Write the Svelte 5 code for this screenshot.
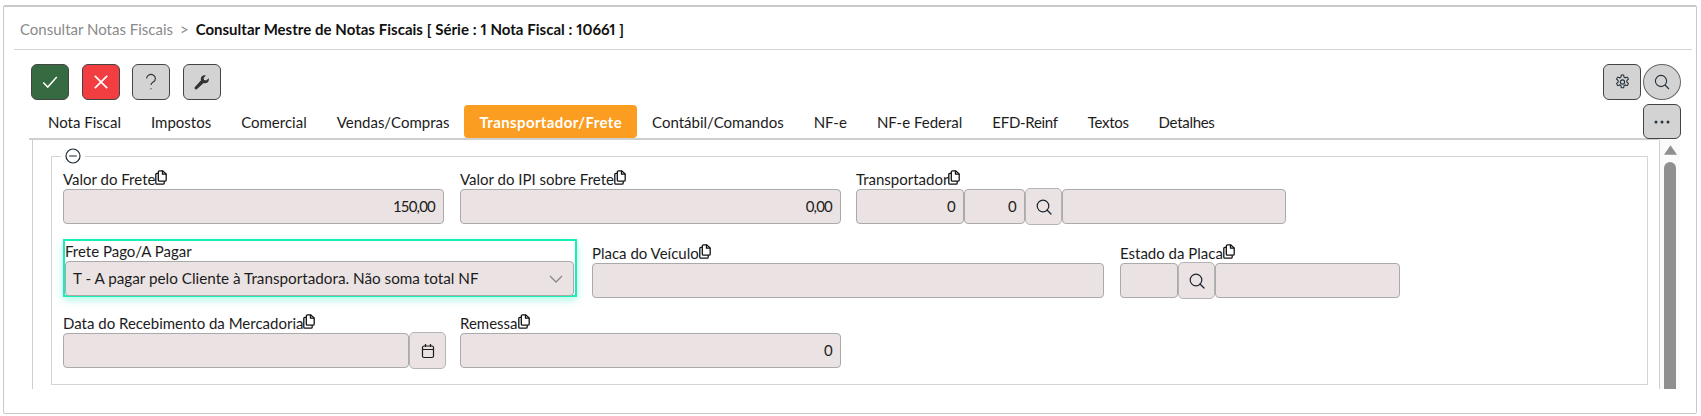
<script>
  const tabs = ["Nota Fiscal", "Impostos", "Comercial", "Vendas/Compras", "Transportador/Frete", "Contábil/Comandos", "NF-e", "NF-e Federal", "EFD-Reinf", "Textos", "Detalhes"];
  const active = "Transportador/Frete";
</script>

{#snippet copyIcon()}
  <svg class="copy" viewBox="0 0 12 15" fill="none" stroke="#111" stroke-width="1.3" aria-hidden="true">
    <path d="M4.5 .8h3.2L11.2 4v6a1.2 1.2 0 0 1-1.2 1.2H4.5A1.2 1.2 0 0 1 3.3 10V2A1.2 1.2 0 0 1 4.5 .8z" />
    <path d="M7.5 .8v3.4h3.7" />
    <path d="M3.3 3.4H2A1.2 1.2 0 0 0 .8 4.6V13A1.2 1.2 0 0 0 2 14.2h6A1.2 1.2 0 0 0 9.2 13v-1.8" />
  </svg>
{/snippet}

{#snippet searchIcon()}
  <svg class="ico" viewBox="0 0 16 16" fill="none" stroke="#1c2430" stroke-width="1.2" aria-hidden="true">
    <circle cx="7" cy="7" r="5.8" />
    <path d="M11 11l4 4" stroke-linecap="round" />
  </svg>
{/snippet}

{#snippet label(text)}
  <div class="label">{text}{@render copyIcon()}</div>
{/snippet}

<div class="frame">
  <header class="crumbs">
    <span class="parent">Consultar Notas Fiscais</span>
    <span class="sep">&gt;</span>
    <span class="current">Consultar Mestre de Notas Fiscais [ Série : 1 Nota Fiscal : 10661 ]</span>
  </header>

  <div class="toolbar">
    <div class="group">
      <button class="btn ok" aria-label="Confirmar">
        <svg viewBox="0 0 16 16" width="18" height="18" fill="none" stroke="#fff" stroke-width="1.3"><path d="M2 8.5l4 4 8-9" /></svg>
      </button>
      <button class="btn cancel" aria-label="Cancelar">
        <svg viewBox="0 0 16 16" width="18" height="18" fill="none" stroke="#fff" stroke-width="1.5"><path d="M2.5 2.5l11 11M13.5 2.5l-11 11" /></svg>
      </button>
      <button class="btn grey" aria-label="Ajuda">
        <svg viewBox="0 0 16 20" width="14" height="18" fill="none" stroke="#333" stroke-width="1.3"><path d="M3 6a5 4.6 0 1 1 7.6 3.9C9 11 8 11.6 8 13.5" /><path d="M8 17v1.4" /></svg>
      </button>
      <button class="btn grey" aria-label="Ferramentas">
        <svg viewBox="0 0 16 16" width="15" height="15" fill="#333"><path d="M15.6 3.4l-2.6 2.5-2.2-.6-.6-2.2L12.7.5a4 4 0 0 0-5.2 5.1L.8 13a1.6 1.6 0 0 0 2.2 2.2l7.3-6.7a4 4 0 0 0 5.3-5.1z" /></svg>
      </button>
    </div>
    <div class="group right">
      <button class="btn grey gear" aria-label="Configurar">
        <svg viewBox="0 0 16 16" width="17" height="17" fill="none" stroke="#24303c" stroke-width="1"><path d="M6.9 1h2.2l.4 2 1.1.6 1.9-.7 1.1 1.9-1.5 1.4v1.5l1.5 1.4-1.1 1.9-1.9-.7-1.1.6-.4 2.1H6.9l-.4-2.1-1.1-.6-1.9.7-1.1-1.9 1.5-1.4V6.2L2.4 4.8l1.1-1.9 1.9.7 1.1-.6z" /><circle cx="8" cy="7.5" r="2" /></svg>
      </button>
      <button class="btn grey round" aria-label="Pesquisar">
        <svg viewBox="0 0 16 16" width="16" height="16" fill="none" stroke="#24303c" stroke-width="1.1"><circle cx="7" cy="7" r="5.6" /><path d="M11 11l4 4" /></svg>
      </button>
    </div>
  </div>

  <div class="tabrow">
    <nav class="tabs">
      {#each tabs as tab}
        <span class="tab" class:active={tab === active}>{tab}</span>
      {/each}
    </nav>
    <button class="btn grey dots" aria-label="Mais">
      <svg viewBox="0 0 16 4" width="16" height="4" fill="#2a3440"><circle cx="2" cy="2" r="1.5" /><circle cx="8" cy="2" r="1.5" /><circle cx="14" cy="2" r="1.5" /></svg>
    </button>
  </div>

  <div class="body">
    <div class="panel">
      <fieldset class="box">
        <legend>
          <svg viewBox="0 0 16 16" width="16" height="16" fill="none" stroke="#1b2530" stroke-width="1.2"><circle cx="8" cy="8" r="7" /><path d="M4.2 8h7.6" /></svg>
        </legend>

        <div class="row first">
          <div class="field w381">
            {@render label("Valor do Frete")}
            <div class="input num">150,00</div>
          </div>
          <div class="field w381">
            {@render label("Valor do IPI sobre Frete")}
            <div class="input num">0,00</div>
          </div>
          <div class="field pull">
            {@render label("Transportador")}
            <div class="combo">
              <div class="input num wa">0</div>
              <div class="input num wb">0</div>
              <button class="side" aria-label="Buscar">{@render searchIcon()}</button>
              <div class="input wc"></div>
            </div>
          </div>
        </div>

        <div class="row second">
          <div class="focused">
            <div class="label plain">Frete Pago/A Pagar</div>
            <div class="input select">
              <span>T - A pagar pelo Cliente à Transportadora. Não soma total NF</span>
              <svg viewBox="0 0 14 8" width="14" height="8" fill="none" stroke="#888" stroke-width="1.3"><path d="M1 1l6 6 6-6" /></svg>
            </div>
          </div>
          <div class="field w512">
            {@render label("Placa do Veículo")}
            <div class="input"></div>
          </div>
          <div class="field">
            {@render label("Estado da Placa")}
            <div class="combo">
              <div class="input wd"></div>
              <button class="side" aria-label="Buscar">{@render searchIcon()}</button>
              <div class="input we"></div>
            </div>
          </div>
        </div>

        <div class="row third">
          <div class="field w381">
            {@render label("Data do Recebimento da Mercadoria")}
            <div class="combo">
              <div class="input wdate"></div>
              <button class="side" aria-label="Calendário">
                <svg class="ico" viewBox="0 0 14 16" fill="none" stroke="#1c1c1c" stroke-width="1.2"><rect x="1.5" y="3" width="11" height="11.5" rx="1.5" /><path d="M1.5 6.5h11M4.5 1v3M9.5 1v3" /></svg>
              </button>
            </div>
          </div>
          <div class="field w381">
            {@render label("Remessa")}
            <div class="input num">0</div>
          </div>
        </div>
      </fieldset>
    </div>

    <div class="scroll">
      <svg viewBox="0 0 14 10" width="13" height="10" fill="#8f8f8f"><path d="M7 0l7 10H0z" /></svg>
      <div class="thumb"></div>
    </div>
  </div>
</div>

<style>
  :global(body) {
    margin: 0;
    background: #fff;
    font-family: Lato, "Liberation Sans", sans-serif;
    font-size: 15px;
    color: #1c1c1c;
  }

  .frame {
    box-sizing: border-box;
    margin: 5px 4px 0 3px;
    height: 409px;
    border: 1px solid #c9c9c9;
    border-top-width: 2px;
    border-radius: 2px;
    overflow: hidden;
  }

  .crumbs {
    box-sizing: border-box;
    display: flex;
    align-items: center;
    gap: 7px;
    height: 43px;
    margin: 0 4px 0 10px;
    padding: 2px 0 0 6px;
    border-bottom: 1px solid #d4d4d4;
    font-size: 15px;
  }

  .parent,
  .sep {
    color: #8a8a8a;
  }

  .current {
    color: #111;
    font-weight: 700;
    font-variant-numeric: proportional-nums;
    word-spacing: 0.2px;
  }

  .toolbar {
    display: flex;
    justify-content: space-between;
    padding: 14px 15px 0 27px;
  }

  .group {
    display: flex;
    gap: 12.5px;
  }

  .group.right {
    gap: 2px;
  }

  .btn {
    display: flex;
    align-items: center;
    justify-content: center;
    box-sizing: border-box;
    width: 38px;
    height: 36px;
    padding: 0;
    border: 1.5px solid #444;
    border-radius: 6px;
  }

  .ok {
    background: #366b41;
  }

  .cancel {
    background: #f23d41;
  }

  .grey {
    background: #d3d3d3;
  }

  .round {
    border-radius: 50%;
    border-color: #666;
  }

  .tabrow {
    display: flex;
    align-items: flex-end;
    margin-top: 4px;
    padding-left: 25px;
  }

  .tabs {
    flex: 1;
    display: flex;
    height: 33px;
    padding-left: 4px;
    border-bottom: 2px solid #cfcfcf;
  }

  .tab {
    box-sizing: border-box;
    display: flex;
    align-items: center;
    height: 33px;
    padding: 0 15px;
    border-radius: 4px;
    color: #1c1c1c;
  }

  .tab:nth-last-child(-n + 3) {
    letter-spacing: -0.3px;
  }

  .tab.active {
    background: #fa9d20;
    color: #fff;
    font-weight: 700;
    letter-spacing: 0.38px;
  }

  .dots {
    flex: none;
    height: 35px;
    margin: 0 15px 1px -16px;
    position: relative;
  }

  .body {
    display: flex;
    height: 249px;
    padding-left: 28px;
  }

  .panel {
    flex: none;
    box-sizing: border-box;
    width: 1628px;
    border-left: 1px solid #cfcfcf;
    border-right: 1px solid #cfcfcf;
    padding: 8px 11px 0 18px;
  }

  .box {
    box-sizing: border-box;
    height: 237px;
    margin: 0;
    padding: 0 0 0 11px;
    border: 1px solid #d4d4d4;
  }

  legend {
    margin-left: -2px;
    padding: 0 4px;
    height: 16px;
    line-height: 0;
  }

  .scroll {
    flex: none;
    display: flex;
    flex-direction: column;
    align-items: center;
    width: 20px;
    background: #fafafa;
    padding-top: 5px;
  }

  .thumb {
    width: 12px;
    flex: 1;
    margin-top: 7px;
    background: #8f8f8f;
    border-radius: 6px 6px 0 0;
  }

  .row {
    display: flex;
    align-items: flex-end;
    gap: 16px;
  }

  .row.first {
    margin-top: 5px;
  }

  .row.second {
    margin-top: 15px;
  }

  .row.third {
    margin-top: 16px;
  }

  .field {
    flex: none;
  }

  .second .field {
    margin-bottom: -1px;
  }

  .pull {
    margin-left: -1px;
  }

  .w381 {
    width: 381px;
  }

  .w512 {
    width: 512px;
  }

  .label {
    display: flex;
    align-items: flex-end;
    height: 20px;
    line-height: 19px;
    white-space: nowrap;
  }

  .copy {
    width: 12px;
    height: 15px;
    margin-bottom: 4px;
  }

  .ico {
    width: 16px;
    height: 16px;
  }

  .input {
    box-sizing: border-box;
    height: 35px;
    line-height: 33px;
    padding: 0 8px;
    background: #ebe3e3;
    border: 1px solid #aaa;
    border-radius: 4px;
  }

  .num {
    text-align: right;
    letter-spacing: -0.8px;
    padding-right: 8px;
  }

  .combo {
    display: flex;
    align-items: center;
    height: 35px;
  }

  .side {
    flex: none;
    display: flex;
    align-items: center;
    justify-content: center;
    box-sizing: border-box;
    width: 37px;
    height: 37px;
    margin: -1px 0;
    padding: 0;
    background: #ebe3e3;
    border: 1px solid #b4b4b4;
    border-radius: 5px;
  }

  .wdate {
    flex: none;
    width: 346px;
  }

  .wa {
    width: 108px;
  }

  .wb {
    width: 61px;
  }

  .wc {
    width: 224px;
  }

  .wd {
    width: 58px;
  }

  .we {
    width: 185px;
  }

  .focused {
    flex: none;
    box-sizing: border-box;
    width: 514px;
    height: 58px;
    margin-right: -1px;
    border: 2px solid #17efb6;
    box-shadow: 0 3px 8px rgba(23, 239, 182, 0.35);
  }

  .plain {
    height: 20px;
  }

  .select {
    display: flex;
    align-items: center;
    justify-content: space-between;
    height: 35px;
    margin-right: 1px;
    padding: 0 10px 0 7px;
    font-size: 15.25px;
  }
</style>
